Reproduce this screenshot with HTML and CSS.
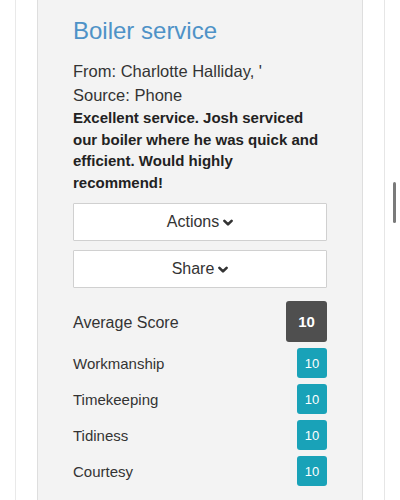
FILE: index.html
```html
<!DOCTYPE html>
<html lang="en">
<head>
<meta charset="utf-8">
<title>Boiler service</title>
<link rel="stylesheet" href="styles.css">
</head>
<body>
<div class="page">
  <div class="card">
    <h2 class="title">Boiler service</h2>
    <div class="meta">From: Charlotte Halliday, '</div>
    <div class="meta">Source: Phone</div>
    <p class="review">Excellent service. Josh serviced our boiler where he was quick and efficient. Would highly recommend!</p>
    <div class="buttons">
      <button class="btn">Actions <svg class="chev" viewBox="0 0 10 8" width="10" height="8"><path d="M1.4 1.8 L5 5.4 L8.6 1.8" fill="none" stroke="#333" stroke-width="2.6" stroke-linecap="round" stroke-linejoin="round"/></svg></button>
      <button class="btn">Share <svg class="chev" viewBox="0 0 10 8" width="10" height="8"><path d="M1.4 1.8 L5 5.4 L8.6 1.8" fill="none" stroke="#333" stroke-width="2.6" stroke-linecap="round" stroke-linejoin="round"/></svg></button>
    </div>
    <div class="scores">
      <div class="row avg"><span class="label">Average Score</span><span class="badge dark">10</span></div>
      <div class="row"><span class="label sm">Workmanship</span><span class="badge info">10</span></div>
      <div class="row"><span class="label sm">Timekeeping</span><span class="badge info">10</span></div>
      <div class="row"><span class="label sm">Tidiness</span><span class="badge info">10</span></div>
      <div class="row"><span class="label sm">Courtesy</span><span class="badge info">10</span></div>
    </div>
  </div>
</div>
<div class="scrollbar"></div>
</body>
</html>
```
FILE: styles.css
```css
html, body {
  margin: 0;
  padding: 0;
  background: #fff;
  overflow: hidden;
}
body {
  font-family: "Liberation Sans", Arial, sans-serif;
  color: #333;
}
.page {
  margin-left: 15px;
  width: 370px;
  min-height: 500px;
  border-left: 1px solid #e9e9e9;
  border-right: 1px solid #e6e6e6;
  padding: 0 21px;
  box-sizing: border-box;
}
.card {
  background: #f3f3f3;
  border-left: 1px solid #dedede;
  border-right: 1px solid #dedede;
  padding: 16px 35px 20px;
  min-height: 500px;
  box-sizing: border-box;
}
.title {
  margin: 0 0 13px;
  font-size: 24px;
  line-height: 30px;
  font-weight: normal;
  color: #4e92c7;
}
.meta {
  font-size: 16.5px;
  line-height: 24px;
  color: #333;
}
.review {
  margin: 0;
  max-width: 248px;
  font-size: 15px;
  line-height: 21.5px;
  font-weight: bold;
  color: #222;
}
.buttons {
  margin-top: 10px;
  display: flex;
  flex-direction: column;
  gap: 9px;
}
.btn {
  height: 38px;
  background: #fff;
  border: 1px solid #d0d0d0;
  border-radius: 1px;
  font-family: inherit;
  font-size: 16px;
  color: #333;
  display: flex;
  align-items: center;
  justify-content: center;
  gap: 4px;
  padding: 0;
}
.chev {
  display: block;
  margin-top: 2px;
}
.scores {
  margin-top: 13px;
  display: flex;
  flex-direction: column;
  gap: 6px;
}
.row {
  display: flex;
  align-items: center;
  justify-content: space-between;
}
.label {
  font-size: 16px;
  color: #333;
}
.label.sm {
  font-size: 15px;
}
.avg .label {
  margin-top: 3px;
}
.badge {
  display: flex;
  align-items: center;
  justify-content: center;
  color: #fff;
  border-radius: 3px;
}
.badge.dark {
  width: 41px;
  height: 41px;
  background: #4f4f4f;
  font-weight: bold;
  font-size: 15px;
}
.badge.info {
  width: 30px;
  height: 30px;
  background: #19a2b8;
  font-size: 13px;
}
.scrollbar {
  position: fixed;
  left: 393px;
  top: 182px;
  width: 3px;
  height: 41px;
  background: #7a7a7a;
  border-radius: 2px;
}
```
